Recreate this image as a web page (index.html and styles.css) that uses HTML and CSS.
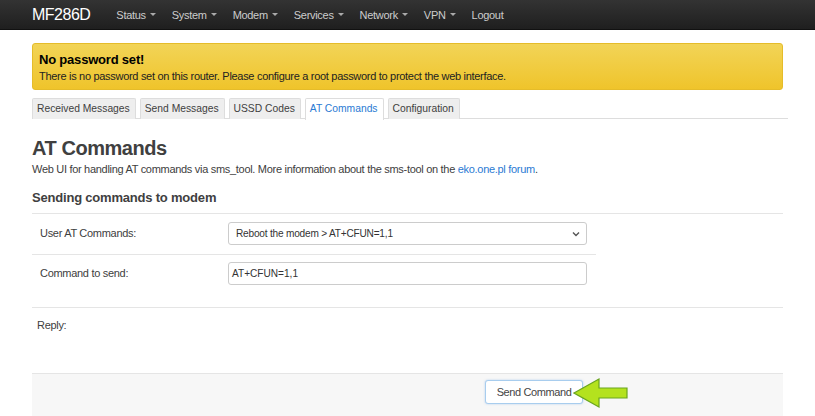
FILE: index.html
```html
<!DOCTYPE html>
<html>
<head>
<meta charset="utf-8">
<link rel="stylesheet" href="styles.css">
</head>
<body>
<header class="navbar">
  <a class="brand">MF286D</a>
  <nav class="menu">
    <span class="item">Status <i class="caret"></i></span>
    <span class="item">System <i class="caret"></i></span>
    <span class="item">Modem <i class="caret"></i></span>
    <span class="item">Services <i class="caret"></i></span>
    <span class="item">Network <i class="caret"></i></span>
    <span class="item">VPN <i class="caret"></i></span>
    <span class="item">Logout</span>
  </nav>
</header>
<main class="container">
  <div class="alert">
    <h4 class="alert-title">No password set!</h4>
    <p class="alert-text">There is no password set on this router. Please configure a root password to protect the web interface.</p>
  </div>
  <ul class="tabs">
    <li class="tab">Received Messages</li>
    <li class="tab">Send Messages</li>
    <li class="tab">USSD Codes</li>
    <li class="tab active">AT Commands</li>
    <li class="tab">Configuration</li>
  </ul>
  <h2 class="title">AT Commands</h2>
  <p class="desc">Web UI for handling AT commands via sms_tool. More information about the sms-tool on the <a class="link">eko.one.pl forum</a>.</p>
  <h3 class="section-title">Sending commands to modem</h3>
  <div class="row row-first">
    <label class="label">User AT Commands:</label>
    <div class="select">
      <span>Reboot the modem &gt; AT+CFUN=1,1</span>
      <svg class="chev" width="8" height="6" viewBox="0 0 8 6"><path d="M1 1.5 L4 4.5 L7 1.5" fill="none" stroke="#555" stroke-width="1.4"/></svg>
    </div>
  </div>
  <div class="row row-second">
    <label class="label">Command to send:</label>
    <div class="input">AT+CFUN=1,1</div>
  </div>
  <div class="reply">
    <span class="reply-label">Reply:</span>
  </div>
  <div class="actions">
    <button class="btn">Send Command</button>
    <svg class="arrow" width="58" height="32" viewBox="0 0 58 32"><path d="M1 16 L26 2 L26 11 L54 11 L54 21 L26 21 L26 30 Z" fill="#b4e21e" stroke="#6aa51e" stroke-width="1.2" stroke-linejoin="miter"/></svg>
  </div>
</main>
</body>
</html>
```
FILE: styles.css
```css
* { box-sizing: border-box; }
body {
  margin: 0;
  font-family: "Liberation Sans", Arial, sans-serif;
  color: #404040;
  background: #fff;
  font-size: 11px;
  letter-spacing: -0.3px;
}
.navbar {
  height: 30px;
  background: linear-gradient(#333333, #1f1f1f);
  border-bottom: 1px solid #111;
  display: flex;
  align-items: center;
  padding-left: 32px;
}
.brand {
  color: #fff;
  font-size: 16px;
  letter-spacing: -0.5px;
  margin-right: 18px;
}
.menu {
  display: flex;
  align-items: center;
}
.item {
  color: #ccc;
  font-size: 11px;
  padding: 0 8px;
  display: flex;
  align-items: center;
}
.caret {
  display: inline-block;
  width: 0; height: 0;
  border-left: 3px solid transparent;
  border-right: 3px solid transparent;
  border-top: 3px solid #aaa;
  margin-left: 4px;
}
.container {
  padding: 0 32px;
}
.alert {
  margin-top: 13px;
  height: 47px;
  background: linear-gradient(#f2d457, #efc42b);
  border: 1px solid #e5bc2a;
  border-radius: 3px;
  padding: 8px 6px 0;
  color: #000;
}
.alert-title {
  margin: 0;
  font-size: 13px;
  font-weight: bold;
  line-height: 15px;
  letter-spacing: -0.2px;
}
.alert-text {
  margin: 2px 0 0;
  font-size: 11px;
  line-height: 14px;
  color: #222;
}
.tabs {
  list-style: none;
  margin: 8px -5px 0 0;
  padding: 0;
  display: flex;
  gap: 4px;
  border-bottom: 1px solid #ddd;
  height: 21px;
}
.tab {
  height: 21px;
  padding: 0 5px 0 4px;
  line-height: 20px;
  font-size: 10.3px;
  letter-spacing: 0;
  background: #eee;
  border: 1px solid #ddd;
  border-bottom: none;
  border-radius: 2px 2px 0 0;
  color: #404040;
}
.tab.active {
  background: #fff;
  color: #2a7ad3;
  height: 22px;
}
.title {
  margin: 18px 0 0;
  font-size: 20px;
  line-height: 22px;
  font-weight: bold;
  letter-spacing: -0.45px;
  color: #404040;
}
.desc {
  margin: 3px 0 0;
  font-size: 11px;
  line-height: 14px;
}
.link { color: #2a7ad3; }
.section-title {
  margin: 14px 0 0;
  font-size: 13px;
  line-height: 15px;
  font-weight: bold;
  letter-spacing: -0.2px;
  padding-bottom: 8px;
  border-bottom: 1px solid #e5e5e5;
}
.row {
  display: flex;
  align-items: flex-start;
}
.row-first {
  height: 40px;
  padding-top: 8px;
}
.row-second {
  height: 53px;
  padding-top: 7px;
  border-top: 1px solid #e5e5e5;
  width: 564px;
}
.label {
  width: 196px;
  padding-left: 8px;
  line-height: 23px;
  font-size: 11px;
}
.select, .input {
  width: 359px;
  height: 23px;
  border: 1px solid #ccc;
  border-radius: 3px;
  line-height: 21px;
  font-size: 10.1px;
  letter-spacing: 0;
  color: #333;
  background: #fff;
}
.select {
  display: flex;
  justify-content: space-between;
  align-items: center;
  padding: 0 6px 0 7px;
  line-height: normal;
  letter-spacing: -0.2px;
}
.input { padding: 0 3px; }
.reply {
  border-top: 1px solid #e5e5e5;
  height: 66px;
  padding: 10px 0 0 5px;
}
.reply-label { line-height: 14px; }
.actions {
  position: relative;
  border-top: 1px solid #e5e5e5;
  background: #f7f7f7;
  height: 44px;
  padding: 6px 0 0 453px;
}
.btn {
  height: 24px;
  width: 98px;
  font-family: "Liberation Sans", Arial, sans-serif;
  font-size: 11px;
  letter-spacing: -0.4px;
  color: #444;
  background: #fff;
  border: 1px solid #a8cdee;
  border-radius: 3px;
  box-shadow: 0 0 2px rgba(100,160,230,0.5);
  padding: 0;
}
.arrow {
  position: absolute;
  left: 541px;
  top: 3px;
}
```
